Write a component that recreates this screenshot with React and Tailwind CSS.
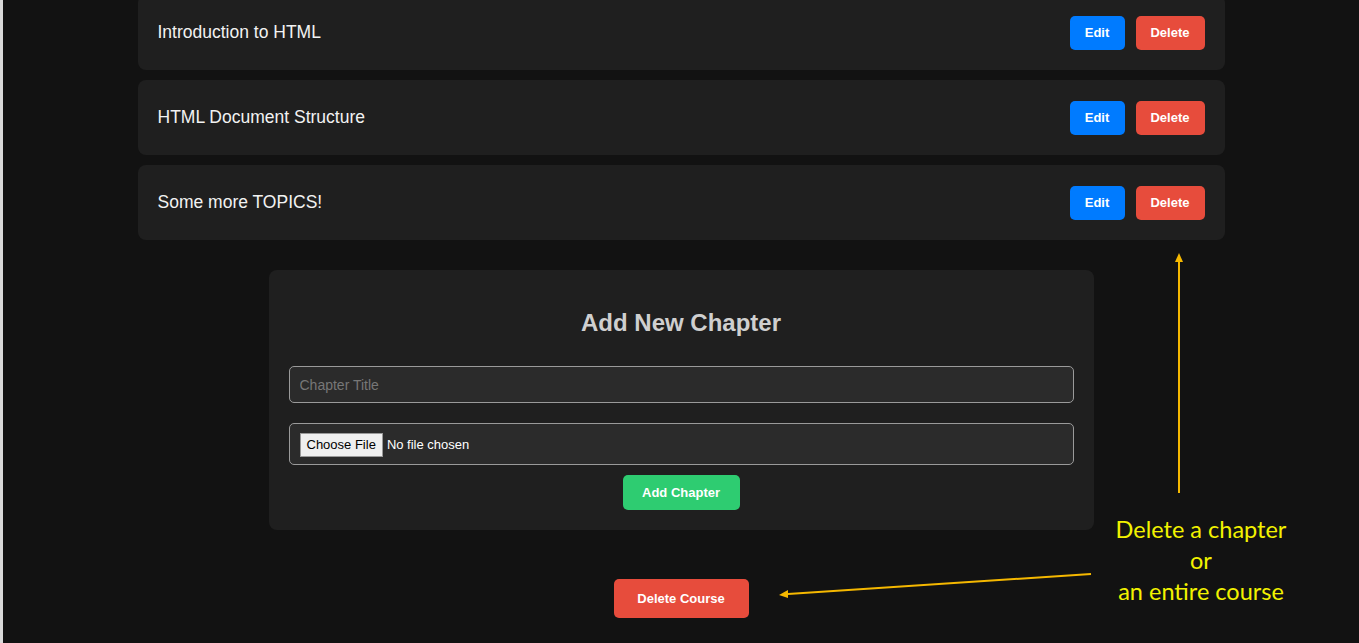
export default function App() {
  const chapters = ["Introduction to HTML", "HTML Document Structure", "Some more TOPICS!"];

  return (
    <div
      className="relative h-[643px] w-full overflow-hidden bg-[#121212] border-l-[3px] border-[#d9d9d9]"
      style={{ fontFamily: '"Liberation Sans", Arial, sans-serif' }}
    >
      <div className="flex flex-col items-center -mt-[5px]">
        {/* chapter list */}
        <div className="flex w-[1087px] flex-col gap-[10px]">
          {chapters.map((title) => (
            <div
              key={title}
              className="flex h-[75px] items-center justify-between rounded-lg bg-[#1f1f1f] px-5"
            >
              <span className="text-[17.5px] text-[#f2f2f2]">{title}</span>
              <div className="flex gap-[11px]">
                <button className="h-[34px] w-[55px] rounded-[5px] bg-[#007bff] text-[13px] font-bold text-white">
                  Edit
                </button>
                <button className="h-[34px] w-[69px] rounded-[5px] bg-[#e74c3c] text-[13px] font-bold text-white">
                  Delete
                </button>
              </div>
            </div>
          ))}
        </div>

        {/* add chapter form */}
        <div className="mt-[30px] flex h-[260px] w-[825px] flex-col items-center rounded-lg bg-[#1f1f1f] px-5 pt-[39px]">
          <h2 className="h-[28px] text-[24px] font-bold leading-[28px] text-[#cfcfcf]">Add New Chapter</h2>
          <input
            type="text"
            placeholder="Chapter Title"
            className="mt-[29px] h-[37px] w-full rounded-[5px] border border-[#9a9a9a] bg-[#2b2b2b] px-[10px] text-[14px] text-white placeholder:text-[#777] outline-none"
          />
          <input
            type="file"
            className="mt-5 h-[42px] w-full rounded-[5px] border border-[#9a9a9a] bg-[#2b2b2b] px-[10px] py-[9px] text-[13px] text-white file:mr-1 file:border file:border-[#999] file:bg-[#efefef] file:px-[6px] file:py-[1px] file:text-[13px] file:text-black"
          />
          <button className="mt-[10px] h-[35px] w-[117px] rounded-[5px] bg-[#2ecc71] text-[13px] font-bold text-white">
            Add Chapter
          </button>
        </div>

        <button className="mt-[49px] h-[39px] w-[135px] rounded-[5px] bg-[#e74c3c] text-[13px] font-bold text-white">
          Delete Course
        </button>
      </div>

      {/* annotation arrows */}
      <svg className="absolute left-[-3px] top-0" width="1359" height="643">
        <line x1="1179" y1="493" x2="1179" y2="262" stroke="#f5b800" strokeWidth="2" />
        <polygon points="1179,253 1175,262 1183,262" fill="#f5b800" />
        <line x1="1091" y1="574" x2="788" y2="594" stroke="#f5b800" strokeWidth="2" />
        <polygon points="779,595 788,590 788,598" fill="#f5b800" />
      </svg>

      <div
        className="absolute left-[1095px] top-[514px] w-[206px] text-center text-[23.5px] leading-[31px] text-[#f2f200]"
        style={{ fontFamily: 'Lato, "Open Sans", sans-serif' }}
      >
        Delete a chapter
        <br />
        or
        <br />
        an entire course
      </div>
    </div>
  );
}
